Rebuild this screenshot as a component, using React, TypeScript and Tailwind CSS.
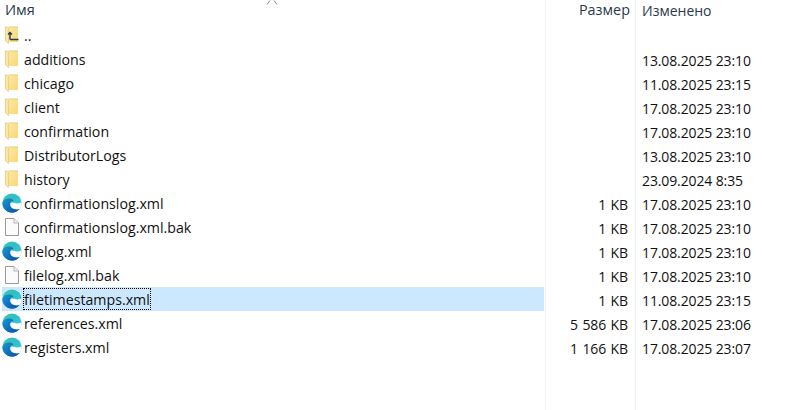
import React from "react";

const Folder = ({ up = false }: { up?: boolean }) => (
  <svg width="14" height="18" viewBox="0 0 14 18" className="block">
    <defs>
      <linearGradient id="fg" x1="0" y1="0" x2="1" y2="1">
        <stop offset="0" stopColor="#fce9a8" />
        <stop offset="1" stopColor="#f8d775" />
      </linearGradient>
    </defs>
    <path d="M3.5 1 H13 V16 H3.5 Z" fill="url(#fg)" />
    <path d="M0.5 0.5 L3.5 2 V17.5 L0.5 15 Z" fill="#fbe7a6" stroke="#e8c468" strokeWidth="0.7" />
    <path d="M3.5 1 H13" stroke="#eccb74" strokeWidth="1" />
    {up && (
      <path
        d="M5 13.5 H13.5 M5 13.5 V6.5 M3 8.5 L5 6.5 L7 8.5"
        fill="none"
        stroke="#2b3a4a"
        strokeWidth="1.4"
      />
    )}
  </svg>
);

const Edge = ({ id }: { id: string }) => (
  <svg width="20" height="20" viewBox="0 0 20 20" className="block">
    <defs>
      <linearGradient id={`${id}a`} x1="0" y1="0" x2="1" y2="0.7">
        <stop offset="0" stopColor="#3ccf95" />
        <stop offset="0.5" stopColor="#2fbfc4" />
        <stop offset="1" stopColor="#38c8e0" />
      </linearGradient>
      <linearGradient id={`${id}b`} x1="0" y1="0.2" x2="0.9" y2="1">
        <stop offset="0" stopColor="#1491d6" />
        <stop offset="1" stopColor="#0c4fa3" />
      </linearGradient>
    </defs>
    <circle cx="10" cy="10" r="9.6" fill={`url(#${id}a)`} />
    <path
      d="M8.5 10 C10 9 12 9.8 14 10.2 C16 10.6 18 10.4 19.6 9.6 L19.6 11 C19.3 13.5 18.4 15.4 16.8 16.8 L8 16 Z"
      fill="#ffffff"
    />
    <path
      d="M0.4 10 C1 6.6 4.5 4.8 8.6 5.6 C10.3 6 11.4 7 11.6 8.4 C9.4 7.9 7.8 9.4 8 11.6 C8.3 15 12.6 17.6 17.6 16 C15.8 18.4 13 19.7 10 19.7 C4.6 19.7 0.3 15.4 0.4 10 Z"
      fill={`url(#${id}b)`}
    />
  </svg>
);

const Doc = () => (
  <svg width="14" height="18" viewBox="0 0 14 18" className="block">
    <path d="M0.5 0.5 H9 L13.5 5 V17.5 H0.5 Z" fill="#fbfbfb" stroke="#9a9a9a" />
    <path d="M9 0.5 V5 H13.5" fill="#f0f0f0" stroke="#b5b5b5" />
  </svg>
);

type Kind = "up" | "folder" | "edge" | "doc";
const rows: { name: string; kind: Kind; size: string; date: string; selected?: boolean }[] = [
  { name: "..", kind: "up", size: "", date: "" },
  { name: "additions", kind: "folder", size: "", date: "13.08.2025 23:10" },
  { name: "chicago", kind: "folder", size: "", date: "11.08.2025 23:15" },
  { name: "client", kind: "folder", size: "", date: "17.08.2025 23:10" },
  { name: "confirmation", kind: "folder", size: "", date: "17.08.2025 23:10" },
  { name: "DistributorLogs", kind: "folder", size: "", date: "13.08.2025 23:10" },
  { name: "history", kind: "folder", size: "", date: "23.09.2024 8:35" },
  { name: "confirmationslog.xml", kind: "edge", size: "1 KB", date: "17.08.2025 23:10" },
  { name: "confirmationslog.xml.bak", kind: "doc", size: "1 KB", date: "17.08.2025 23:10" },
  { name: "filelog.xml", kind: "edge", size: "1 KB", date: "17.08.2025 23:10" },
  { name: "filelog.xml.bak", kind: "doc", size: "1 KB", date: "17.08.2025 23:10" },
  { name: "filetimestamps.xml", kind: "edge", size: "1 KB", date: "11.08.2025 23:15", selected: true },
  { name: "references.xml", kind: "edge", size: "5 586 KB", date: "17.08.2025 23:06" },
  { name: "registers.xml", kind: "edge", size: "1 166 KB", date: "17.08.2025 23:07" },
];

const Icon = ({ kind, id }: { kind: Kind; id: string }) => (
  <span className="flex w-[20px] justify-center">
    {kind === "edge" ? <Edge id={id} /> : kind === "doc" ? <Doc /> : <Folder up={kind === "up"} />}
  </span>
);

export default function App() {
  return (
    <div className="relative flex h-[410px] w-[800px] overflow-hidden bg-white text-[14px] text-[#111111] font-['Open_Sans','Noto_Sans',sans-serif]">
      <svg width="12" height="5" viewBox="0 0 12 5" className="absolute left-[266px] top-0">
        <path d="M1 4.5 L4 0.5 M11 4.5 L8 0.5" stroke="#8a8a8a" strokeWidth="1" fill="none" />
      </svg>
      <div className="w-[546px] shrink-0 border-r border-[#eef1f6]">
        <div className="mb-[3px] flex h-[20px] items-center pl-[5px] text-[14.6px] text-[#2a3a4a]">Имя</div>
        {rows.map((r, i) => (
          <div
            key={r.name}
            className={`ml-[2px] mr-[1px] flex h-[24px] items-center text-[14.2px] ${r.selected ? "bg-[#cce8ff]" : ""}`}
          >
            <Icon kind={r.kind} id={`edge${i}`} />
            {r.selected ? (
              <span className="ml-[1px] box-border h-[22px] border border-dotted border-black leading-[22px]">
                {r.name}
              </span>
            ) : (
              <span className="ml-[2px] pt-[2px] leading-[20px]">{r.name}</span>
            )}
          </div>
        ))}
      </div>
      <div className="w-[90px] shrink-0 border-r border-[#eef1f6] pr-[7px] text-right tracking-[-0.12px] [word-spacing:1px]">
        <div className="mb-[3px] -mr-[2px] flex h-[20px] items-center justify-end text-[14.4px] tracking-normal text-[#2a3a4a]">
          Размер
        </div>
        {rows.map((r) => (
          <div key={r.name} className="flex h-[24px] items-center justify-end pt-[2px]">
            {r.size}
          </div>
        ))}
      </div>
      <div className="flex-1 pl-[6px] tracking-[-0.12px]">
        <div className="mb-[3px] flex h-[20px] items-center tracking-normal text-[#2a3a4a]">Изменено</div>
        {rows.map((r) => (
          <div key={r.name} className="flex h-[24px] items-center pt-[2px]">
            {r.date}
          </div>
        ))}
      </div>
    </div>
  );
}
